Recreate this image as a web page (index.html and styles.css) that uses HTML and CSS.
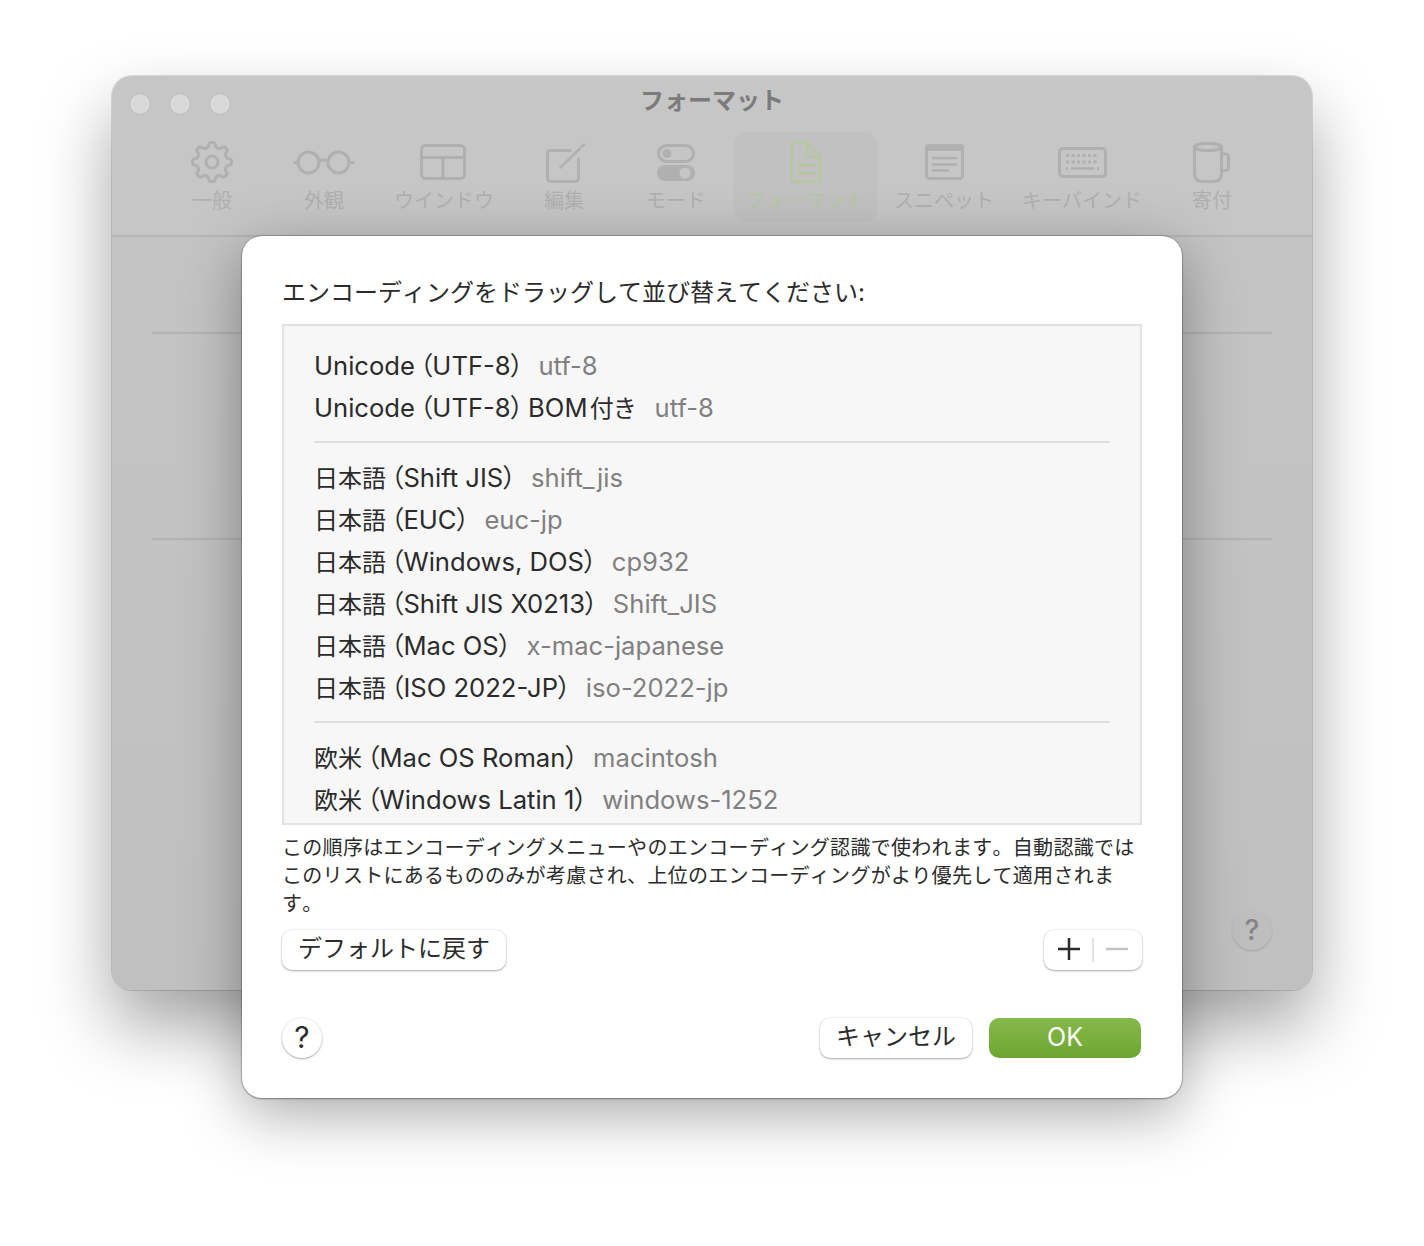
FILE: index.html
```html
<!DOCTYPE html>
<html lang="ja">
<head>
    <meta charset="UTF-8">
    <meta name="viewport" content="width=device-width, initial-scale=1.0">
    <title>フォーマット</title>
    <link rel="stylesheet" href="styles.css">
</head>
<body>
    <div class="window">
        <div class="titlebar">
            <div class="lights"><span></span><span></span><span></span></div>
            <div class="title">フォーマット</div>
        </div>
        <div class="toolbar">
            <div class="tool">
                <svg class="tool-icon" viewBox="0 0 64 44">
                    <defs><path id="tooth" d="M-5.74 -13.86Q-3.6 -14.6 -3.4 -16L-2.9 -18.4Q-2.6 -19.6 0 -19.6Q2.6 -19.6 2.9 -18.4L3.4 -16Q3.6 -14.6 5.74 -13.86"/></defs>
                    <g transform="translate(32 22)">
                        <use href="#tooth"/>
                        <use href="#tooth" transform="rotate(45)"/>
                        <use href="#tooth" transform="rotate(90)"/>
                        <use href="#tooth" transform="rotate(135)"/>
                        <use href="#tooth" transform="rotate(180)"/>
                        <use href="#tooth" transform="rotate(225)"/>
                        <use href="#tooth" transform="rotate(270)"/>
                        <use href="#tooth" transform="rotate(315)"/>
                        <circle r="6"/>
                    </g>
                </svg>
                <span class="tool-label">一般</span>
            </div>
            <div class="tool">
                <svg class="tool-icon" viewBox="0 0 64 44">
                    <circle cx="16.5" cy="22.5" r="10.5"/>
                    <circle cx="46.5" cy="22.5" r="10.5"/>
                    <path d="M3 22.5H6M27 21Q31.5 19 36 21M57 22.5H61"/>
                </svg>
                <span class="tool-label">外観</span>
            </div>
            <div class="tool">
                <svg class="tool-icon" viewBox="0 0 64 44">
                    <rect x="9.5" y="5.5" width="43" height="33" rx="4"/>
                    <path d="M9.5 17.5H52.5M31 17.5V38.5"/>
                </svg>
                <span class="tool-label">ウインドウ</span>
            </div>
            <div class="tool">
                <svg class="tool-icon" viewBox="0 0 64 44">
                    <path d="M38 10.5H19Q15.5 10.5 15.5 14V38Q15.5 41.5 19 41.5H43Q46.5 41.5 46.5 38V19"/>
                    <path class="thin" d="M28.5 27.5L48 8.5M50 6.5L52 4.5"/>
                </svg>
                <span class="tool-label">編集</span>
            </div>
            <div class="tool">
                <svg class="tool-icon" viewBox="0 0 64 44">
                    <rect x="14.5" y="5.5" width="35" height="16" rx="8"/>
                    <circle class="solid" cx="23" cy="13.5" r="4.5"/>
                    <rect class="solid" x="13" y="25" width="38" height="16" rx="8"/>
                    <circle class="hole" cx="41" cy="33" r="5.5"/>
                </svg>
                <span class="tool-label">モード</span>
            </div>
            <div class="tool active">
                <svg class="tool-icon" viewBox="0 0 64 44">
                    <path d="M17.5 6Q17.5 2.5 21 2.5H33L46.5 17V38Q46.5 41.5 43 41.5H21Q17.5 41.5 17.5 38Z"/>
                    <path d="M32.5 2.5V13Q32.5 17 36.5 17H46.5M23 25H41M23 33H41"/>
                </svg>
                <span class="tool-label">フォーマット</span>
            </div>
            <div class="tool">
                <svg class="tool-icon" viewBox="0 0 64 44">
                    <rect x="14.5" y="5.5" width="36" height="33" rx="3"/>
                    <path class="solid" d="M13 11V7Q13 4 16 4H49Q52 4 52 7V11Z"/>
                    <path class="thin" d="M21 18H44M21 24.5H44M21 30.5H36"/>
                </svg>
                <span class="tool-label">スニペット</span>
            </div>
            <div class="tool">
                <svg class="tool-icon" viewBox="0 0 64 44">
                    <rect x="9.5" y="8.5" width="46" height="28" rx="3.5"/>
                    <path class="keys" d="M16 15.5H49M16 22H49"/>
                    <path class="keys" d="M16 28.5H18M47 28.5H49"/>
                    <path class="thin" d="M22 28.5H43"/>
                </svg>
                <span class="tool-label">キーバインド</span>
            </div>
            <div class="tool">
                <svg class="tool-icon" viewBox="0 0 64 44">
                    <path d="M14.5 7V33Q14.5 41.5 23 41.5H33Q41.5 41.5 41.5 33V7"/>
                    <ellipse cx="28" cy="7" rx="13.5" ry="3.5"/>
                    <path d="M41.5 14H45Q48.5 14 48.5 17.5V27Q48.5 30.5 45 30.5H41.5"/>
                </svg>
                <span class="tool-label">寄付</span>
            </div>
        </div>
        <div class="pane">
            <div class="pane-line"></div>
            <div class="pane-line second"></div>
            <div class="pane-help">?</div>
        </div>

        <div class="sheet">
            <div class="sheet-title">エンコーディングをドラッグして並び替えてください:</div>
            <div class="enc-list">
                <div class="enc-row"><span class="enc-name">Unicode&thinsp;（UTF-8）</span><span class="enc-code">utf-8</span></div>
                <div class="enc-row"><span class="enc-name">Unicode&thinsp;（UTF-8）&thinsp;BOM&hairsp;<span class="jp">付き</span>&thinsp;</span><span class="enc-code">utf-8</span></div>
                <div class="enc-sep"></div>
                <div class="enc-row"><span class="enc-name"><span class="jp">日本語</span>&thinsp;（Shift JIS）</span><span class="enc-code">shift_jis</span></div>
                <div class="enc-row"><span class="enc-name"><span class="jp">日本語</span>&thinsp;（EUC）</span><span class="enc-code">euc-jp</span></div>
                <div class="enc-row"><span class="enc-name"><span class="jp">日本語</span>&thinsp;（Windows, DOS）</span><span class="enc-code">cp932</span></div>
                <div class="enc-row"><span class="enc-name"><span class="jp">日本語</span>&thinsp;（Shift JIS X0213）</span><span class="enc-code">Shift_JIS</span></div>
                <div class="enc-row"><span class="enc-name"><span class="jp">日本語</span>&thinsp;（Mac OS）</span><span class="enc-code">x-mac-japanese</span></div>
                <div class="enc-row"><span class="enc-name"><span class="jp">日本語</span>&thinsp;（ISO 2022-JP）</span><span class="enc-code">iso-2022-jp</span></div>
                <div class="enc-sep"></div>
                <div class="enc-row"><span class="enc-name"><span class="jp">欧米</span>&thinsp;（Mac OS Roman）</span><span class="enc-code">macintosh</span></div>
                <div class="enc-row"><span class="enc-name"><span class="jp">欧米</span>&thinsp;（Windows Latin 1）</span><span class="enc-code">windows-1252</span></div>
            </div>
            <p class="note">この順序はエンコーディングメニューやのエンコーディング認識で使われます。自動認識ではこのリストにあるもののみが考慮され、上位のエンコーディングがより優先して適用されます。</p>
            <div class="list-actions">
                <div class="btn">デフォルトに戻す</div>
                <div class="btn stepper">
                    <svg class="sym" viewBox="0 0 22 22"><path d="M0 11H22M11 0V22"/></svg>
                    <span class="stepper-sep"></span>
                    <svg class="sym off" viewBox="0 0 22 22"><path d="M0 11H22"/></svg>
                </div>
            </div>
            <div class="sheet-footer">
                <div class="btn help">?</div>
                <div class="btn wide cancel">キャンセル</div>
                <div class="btn wide ok">OK</div>
            </div>
        </div>
    </div>
</body>
</html>
```

FILE: styles.css
```css
body { margin: 0; height: 1246px; overflow: hidden; background: #ffffff; color: #2b2b2b; font-family: Inter, "Noto Sans CJK JP", sans-serif; }

.window { position: relative; width: 1200px; height: 914px; margin: 76px 0 0 112px; box-sizing: border-box; background: #c6c6c6; border-radius: 20px; box-shadow: 0 0 0 1px rgba(0, 0, 0, 0.12), 0 36px 70px rgba(0, 0, 0, 0.36); }

.titlebar { display: flex; height: 56px; align-items: center; justify-content: center; position: relative; }
.lights { position: absolute; left: 17px; top: 17px; display: flex; gap: 18px; }
.lights span { width: 22px; height: 22px; border-radius: 50%; box-sizing: border-box; background: #d9d9d9; border: 1px solid #bdbdbd; }
.title { font-size: 24px; font-weight: 700; color: #7b7b7b; margin-top: -12px; font-kerning: none; }

.toolbar { display: flex; justify-content: center; gap: 4px; height: 105px; box-sizing: border-box; border-bottom: 2px solid #b6b6b6; }
.tool { display: flex; flex-direction: column; align-items: center; height: 90px; min-width: 108px; box-sizing: border-box; padding: 8px 12px 0; border-radius: 14px; color: #b0b0b0; }
.tool.active { background: rgba(0, 0, 0, 0.025); color: #b9c6a6; }
.tool-icon { width: 64px; height: 44px; flex: none; fill: none; stroke: currentColor; stroke-width: 3; stroke-linecap: round; stroke-linejoin: round; }
.tool-icon .solid { fill: currentColor; stroke: none; }
.tool-icon .hole { fill: #c6c6c6; stroke: none; }
.tool-icon .thin { stroke-width: 2.5; }
.tool-icon .keys { stroke-linecap: butt; stroke-dasharray: 3 2.5; }
.tool-label { font-size: 20px; line-height: 30px; margin-top: 2px; white-space: nowrap; font-kerning: none; }

.pane { position: relative; height: 753px; box-sizing: border-box; padding-top: 95px; background: linear-gradient(#c4c4c4, #c0c0c0); border-radius: 0 0 20px 20px; }
.pane-line { height: 2px; margin: 0 40px; background: #b4b4b4; }
.pane-line.second { margin-top: 204px; }
.pane-help { position: absolute; right: 40px; bottom: 40px; width: 40px; height: 40px; border-radius: 50%; background: #bebebe; box-shadow: 0 1px 2px rgba(0, 0, 0, 0.15); color: #858585; font-size: 28px; font-weight: 500; line-height: 40px; text-align: center; }

.sheet { position: absolute; left: 130px; top: 160px; width: 940px; height: 862px; box-sizing: border-box; padding: 0 40px; background: #ffffff; border-radius: 20px; box-shadow: 0 0 0 1px rgba(0, 0, 0, 0.14), 0 1px 2px rgba(0, 0, 0, 0.3), 0 16px 60px rgba(0, 0, 0, 0.34); }
.sheet-title { font-size: 24px; line-height: 32px; padding-top: 41px; height: 88px; box-sizing: border-box; font-kerning: none; }

.enc-list { height: 501px; box-sizing: border-box; overflow: hidden; padding: 19px 30px 0; background: #f7f7f7; border: 2px solid #e2e2e2; }
.enc-row { display: flex; height: 42px; align-items: baseline; font-size: 25.6px; line-height: 42px; white-space: nowrap; font-feature-settings: "palt"; }
.enc-name .jp { font-size: 24px; }
.enc-code { color: #808080; margin-left: 15px; }
.enc-sep { height: 2px; margin: 12px 0 14px; background: #dedede; }

.note { margin: 9px 0 0; height: 83px; font-size: 20px; line-height: 28px; letter-spacing: 0.3px; font-kerning: none; }

.list-actions { display: flex; justify-content: space-between; margin-top: 13px; }
.btn { height: 40px; box-sizing: border-box; border-radius: 10px; background: #ffffff; box-shadow: 0 0 0 1px rgba(0, 0, 0, 0.05), 0 1px 2px rgba(0, 0, 0, 0.3); font-size: 24px; line-height: 38px; text-align: center; padding: 0 16px; font-kerning: none; }
.stepper { display: flex; align-items: center; width: 98px; padding: 0 14px; justify-content: space-between; }
.stepper-sep { width: 2px; height: 24px; background: #e2e2e2; }
.sym { width: 22px; height: 22px; margin-bottom: 2px; fill: none; stroke: #2b2b2b; stroke-width: 2.5; }
.sym.off { stroke: #c4c4c4; }

.sheet-footer { display: flex; margin: 48px 1px 0 0; gap: 17px; }
.help { width: 40px; padding: 0; border-radius: 50%; font-size: 30px; margin-right: auto; }
.wide { width: 152px; padding: 0; }
.ok { background: linear-gradient(#85b94a, #6ea632); box-shadow: none; color: #ffffff; font-size: 25px; }
```
